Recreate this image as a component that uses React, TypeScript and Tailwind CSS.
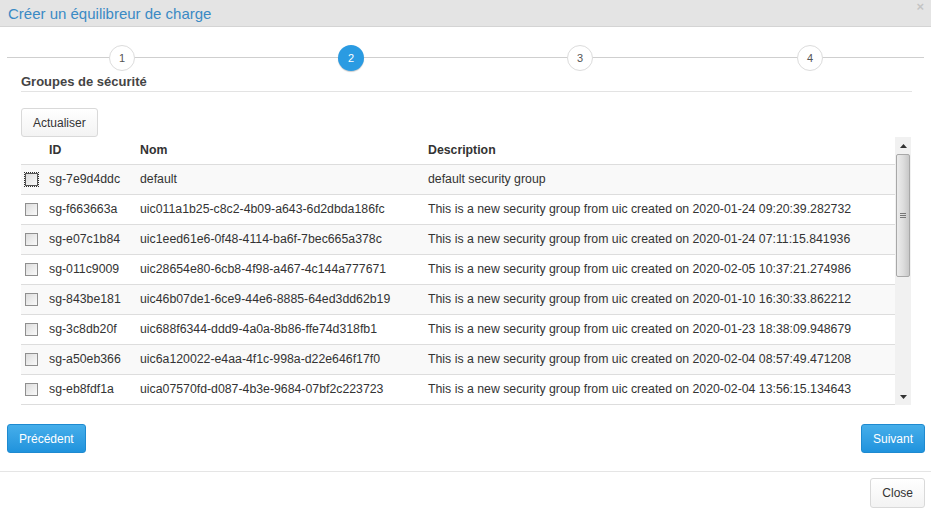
import React from 'react';

const rows = [
  ['sg-7e9d4ddc', 'default', 'default security group'],
  ['sg-f663663a', 'uic011a1b25-c8c2-4b09-a643-6d2dbda186fc', 'This is a new security group from uic created on 2020-01-24 09:20:39.282732'],
  ['sg-e07c1b84', 'uic1eed61e6-0f48-4114-ba6f-7bec665a378c', 'This is a new security group from uic created on 2020-01-24 07:11:15.841936'],
  ['sg-011c9009', 'uic28654e80-6cb8-4f98-a467-4c144a777671', 'This is a new security group from uic created on 2020-02-05 10:37:21.274986'],
  ['sg-843be181', 'uic46b07de1-6ce9-44e6-8885-64ed3dd62b19', 'This is a new security group from uic created on 2020-01-10 16:30:33.862212'],
  ['sg-3c8db20f', 'uic688f6344-ddd9-4a0a-8b86-ffe74d318fb1', 'This is a new security group from uic created on 2020-01-23 18:38:09.948679'],
  ['sg-a50eb366', 'uic6a120022-e4aa-4f1c-998a-d22e646f17f0', 'This is a new security group from uic created on 2020-02-04 08:57:49.471208'],
  ['sg-eb8fdf1a', 'uica07570fd-d087-4b3e-9684-07bf2c223723', 'This is a new security group from uic created on 2020-02-04 13:56:15.134643'],
];

function Step({ n, active }: { n: number; active?: boolean }) {
  return (
    <div
      className={
        active
          ? 'w-[26px] h-[26px] rounded-full bg-[#2a9be2] text-white flex items-center justify-center text-[11px] shadow-[0_1px_1px_rgba(0,0,0,0.2)]'
          : 'w-[26px] h-[26px] rounded-full bg-white border border-[#dcdcdc] text-[#555] flex items-center justify-center text-[11px]'
      }
    >
      {n}
    </div>
  );
}

function Checkbox({ focused }: { focused?: boolean }) {
  return (
    <div
      className={
        'w-[13px] h-[13px] border bg-gradient-to-br from-[#dcdcdc] to-[#fafafa] ' +
        (focused ? 'border-[#555] outline-1 outline-dotted outline-[#333]' : 'border-[#8f8f8f]')
      }
    />
  );
}

export default function App() {
  return (
    <div className="w-[931px] h-[511px] bg-white flex flex-col font-['Liberation_Sans',Arial,sans-serif] text-[#333] overflow-hidden">
      {/* header */}
      <div className="h-[27px] bg-[#e4e4e4] border-b border-[#d4d4d4] flex items-center justify-between pl-[8px] pr-[7px] shrink-0">
        <span className="text-[15px] text-[#3a8ac4] leading-none">Créer un équilibreur de charge</span>
        <span className="text-[13px] text-[#c4c4c4] font-bold leading-none -mt-[14px]">×</span>
      </div>

      {/* stepper */}
      <div className="relative mx-[7px] mt-[18px] h-[26px] flex items-center shrink-0">
        <div className="absolute left-0 right-0 top-[12px] h-px bg-[#cfcfcf]" />
        <div className="relative flex w-full">
          <div className="ml-[102px]"><Step n={1} /></div>
          <div className="ml-[203px]"><Step n={2} active /></div>
          <div className="ml-[203px]"><Step n={3} /></div>
          <div className="ml-[204px]"><Step n={4} /></div>
        </div>
      </div>

      {/* section title */}
      <div className="ml-[21px] mr-[19px] mt-[3px] pb-[2px] border-b border-[#e3e3e3] shrink-0">
        <span className="block text-[13px] leading-[15px] font-bold text-[#444]">Groupes de sécurité</span>
      </div>

      <div className="px-[21px] mt-[16px] shrink-0">
        <button className="h-[29px] px-[11px] text-[12px] leading-none text-[#333] bg-gradient-to-b from-white to-[#f3f3f3] border border-[#d9d9d9] rounded-[3px]">
          Actualiser
        </button>
      </div>

      {/* table with scrollbar */}
      <div className="flex ml-[21px] w-[890px] h-[268px] shrink-0">
        <div className="w-[874px] overflow-hidden">
          <table className="w-full text-[12.3px] leading-none border-collapse">
            <thead>
              <tr className="h-[27px] border-b border-[#dddddd]">
                <th className="w-[28px]" />
                <th className="text-left font-bold w-[91px] pl-0">ID</th>
                <th className="text-left font-bold w-[288px]">Nom</th>
                <th className="text-left font-bold">Description</th>
              </tr>
            </thead>
            <tbody>
              {rows.map((r, i) => (
                <tr key={r[0]} className={(i % 2 === 0 ? 'bg-[#f9f9f9]' : 'bg-white') + ' h-[30px] border-b border-[#dddddd]'}>
                  <td className="pl-[4px]"><Checkbox focused={i === 0} /></td>
                  <td className="whitespace-nowrap">{r[0]}</td>
                  <td className="whitespace-nowrap">{r[1]}</td>
                  <td className="whitespace-nowrap">{r[2]}</td>
                </tr>
              ))}
            </tbody>
          </table>
        </div>
        <div className="w-[16px] bg-[#f1f1f1] flex flex-col">
          <div className="h-[17px] flex items-center justify-center">
            <svg width="7" height="4" viewBox="0 0 7 4"><path d="M0 4 L3.5 0 L7 4 Z" fill="#333" /></svg>
          </div>
          <div className="mx-[1px] h-[123px] border border-[#a8a8a8] rounded-[2px] bg-gradient-to-r from-[#ececec] via-[#dedede] to-[#c8c8c8] flex items-center justify-center">
            <div className="flex flex-col gap-[1px]">
              <div className="w-[6px] h-px bg-[#777]" />
              <div className="w-[6px] h-px bg-[#777]" />
              <div className="w-[6px] h-px bg-[#777]" />
            </div>
          </div>
          <div className="flex-1" />
          <div className="h-[17px] flex items-center justify-center">
            <svg width="7" height="4" viewBox="0 0 7 4"><path d="M0 0 L3.5 4 L7 0 Z" fill="#333" /></svg>
          </div>
        </div>
      </div>

      {/* nav buttons */}
      <div className="flex justify-between px-[7px] mt-[19px] shrink-0">
        <button className="h-[29px] px-[11px] text-[12px] leading-none text-white bg-gradient-to-b from-[#45aeea] to-[#1f93dd] border border-[#1e8ad0] rounded-[3px]">
          Précédent
        </button>
        <button className="h-[29px] px-[11px] text-[12px] leading-none text-white bg-gradient-to-b from-[#45aeea] to-[#1f93dd] border border-[#1e8ad0] rounded-[3px] mr-[-1px]">
          Suivant
        </button>
      </div>

      {/* footer */}
      <div className="mt-[18px] border-t border-[#e5e5e5] flex justify-end pr-[6px] pt-[6px] shrink-0">
        <button className="h-[30px] px-[11px] text-[12px] leading-none text-[#333] bg-gradient-to-b from-white to-[#f3f3f3] border border-[#d9d9d9] rounded-[3px]">
          Close
        </button>
      </div>
    </div>
  );
}
